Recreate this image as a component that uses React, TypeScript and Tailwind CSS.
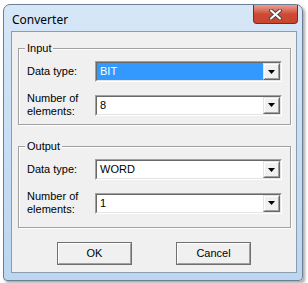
import React from "react";

const ui = { fontFamily: '"Liberation Sans", Arial, sans-serif' };

const Arrow = () => (
  <svg width="7" height="4" viewBox="0 0 7 4">
    <path d="M0 0h7L3.5 4z" fill="#000" />
  </svg>
);

const Combo: React.FC<{ value: string; selected?: boolean }> = ({ value, selected }) => (
  <div className="w-[187px] h-[21px] border-t border-l border-[#a0a0a0] border-r-white border-b-white border-r border-b">
    <div className="h-full flex border-t border-l border-[#696969] border-r border-b border-r-[#e3e3e3] border-b-[#e3e3e3] bg-white">
      <div
        className={
          "flex-1 flex items-center pl-[3px] text-[11px] " +
          (selected ? "bg-[#3399ff] text-white" : "text-black")
        }
      >
        {value}
      </div>
      <div className="w-[17px] border-t border-l border-t-[#e3e3e3] border-l-[#e3e3e3] border-r border-b border-r-[#696969] border-b-[#696969]">
        <div className="h-full flex items-center justify-center bg-[#f0f0f0] border-t border-l border-white border-r border-b border-r-[#a0a0a0] border-b-[#a0a0a0]">
          <Arrow />
        </div>
      </div>
    </div>
  </div>
);

const Row: React.FC<{ label: React.ReactNode; value: string; selected?: boolean }> = ({ label, value, selected }) => (
  <div className="flex items-center">
    <div className="w-[68px] text-[11px] leading-[13px] text-black">{label}</div>
    <Combo value={value} selected={selected} />
  </div>
);

const Group: React.FC<{ title: string; h: string; children: React.ReactNode }> = ({ title, h, children }) => (
  <div
    className={
      "relative ml-[6px] w-[273px] border border-[#a0a0a0] shadow-[1px_1px_0_#fff,inset_1px_1px_0_#fff] pl-[8px] pt-[12px] flex flex-col gap-[10px] " +
      h
    }
  >
    <span className="absolute -top-[8px] left-[6px] px-[2px] bg-[#f0f0f0] text-[11px] leading-[14px]">{title}</span>
    {children}
  </div>
);

const Button: React.FC<{ children: React.ReactNode }> = ({ children }) => (
  <div className="w-[75px] h-[23px] border border-[#707070]">
    <div className="h-full flex items-center justify-center text-[11px] bg-[#f0f0f0] border-t border-l border-white border-r border-b border-r-[#a0a0a0] border-b-[#a0a0a0]">
      {children}
    </div>
  </div>
);

export default function App() {
  return (
    <div className="w-[308px] h-[283px] bg-white pt-[4px] pl-[3px]" style={ui}>
      <div className="w-[300px] h-[277px] rounded-t-[7px] rounded-b-[4px] border border-[#6f7f93] bg-gradient-to-b from-[#d6e7f7] via-[#c7def4] to-[#bcd6f0] shadow-[2px_2px_3px_rgba(0,0,0,0.35)] pl-[7px] pr-[5px] pb-[7px] flex flex-col">
        <div className="h-[26px] flex items-start justify-between">
          <span className="mt-[6px] ml-[1px] text-[12px] text-black" style={{ fontFamily: '"Noto Sans", "Open Sans", sans-serif' }}>
            Converter
          </span>
          <div className="-mr-[1px] w-[45px] h-[19px] rounded-b-[4px] border border-[#7a2a24] border-t-0 bg-gradient-to-b from-[#e8a093] via-[#cf4a35] to-[#c8452e] flex items-center justify-center">
            <svg width="13" height="11" viewBox="0 0 13 11">
              <path d="M2 1.5l9 8M11 1.5l-9 8" stroke="#4a4a4a" strokeWidth="4" strokeLinecap="round" />
              <path d="M2 1.5l9 8M11 1.5l-9 8" stroke="#fff" strokeWidth="2" strokeLinecap="round" />
            </svg>
          </div>
        </div>
        <div className="flex-1 border border-[#8b9bb0] bg-[#f0f0f0] pt-[16px]">
          <Group title="Input" h="h-[77px]">
            <Row label="Data type:" value="BIT" selected />
            <Row label={<>Number of<br />elements:</>} value="8" />
          </Group>
          <div className="h-[21px]" />
          <Group title="Output" h="h-[82px]">
            <Row label="Data type:" value="WORD" />
            <Row label={<>Number of<br />elements:</>} value="1" />
          </Group>
          <div className="mt-[14px] flex gap-[44px] pl-[45px]">
            <Button>OK</Button>
            <Button>Cancel</Button>
          </div>
        </div>
      </div>
    </div>
  );
}
